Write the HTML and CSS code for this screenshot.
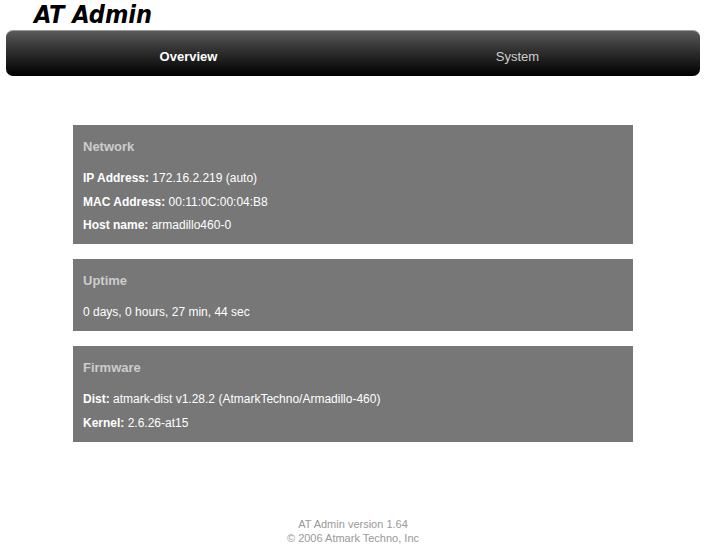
FILE: index.html
```html
<!DOCTYPE html>
<html>
<head>
<meta charset="utf-8">
<title>AT Admin</title>
<link rel="stylesheet" href="styles.css">
</head>
<body>
<div class="page">
  <h1 class="logo">AT Admin</h1>
  <nav class="navbar">
    <a class="tab active" href="#">Overview</a>
    <a class="tab" href="#">System</a>
  </nav>
  <main class="content">
    <section class="panel">
      <h2 class="panel-title">Network</h2>
      <p class="row"><b>IP Address:</b> 172.16.2.219 (auto)</p>
      <p class="row"><b>MAC Address:</b> 00:11:0C:00:04:B8</p>
      <p class="row"><b>Host name:</b> armadillo460-0</p>
    </section>
    <section class="panel">
      <h2 class="panel-title">Uptime</h2>
      <p class="row">0 days, 0 hours, 27 min, 44 sec</p>
    </section>
    <section class="panel">
      <h2 class="panel-title">Firmware</h2>
      <p class="row"><b>Dist:</b> atmark-dist v1.28.2 (AtmarkTechno/Armadillo-460)</p>
      <p class="row"><b>Kernel:</b> 2.6.26-at15</p>
    </section>
  </main>
  <footer class="footer">
    <div>AT Admin version 1.64</div>
    <div>&copy; 2006 Atmark Techno, Inc</div>
  </footer>
</div>
</body>
</html>
```

FILE: styles.css
```css
html, body {
  margin: 0;
  padding: 0;
  background: #ffffff;
}

body {
  font-family: "Liberation Sans", Arial, sans-serif;
  color: #ffffff;
}

.page {
  padding: 0 8px 0 6px;
}

.logo {
  margin: 0;
  padding: 1px 0 0 28px;
  height: 30px;
  box-sizing: border-box;
  line-height: 28px;
  font-family: "DejaVu Sans Condensed", "DejaVu Sans", sans-serif;
  font-stretch: condensed;
  font-weight: bold;
  font-style: italic;
  font-size: 25px;
  color: #000000;
}

.navbar {
  display: flex;
  height: 46px;
  padding: 6px 18px 0 18px;
  border-radius: 7px;
  background: linear-gradient(to bottom, #5a5a5a 0%, #333333 40%, #000000 100%);
  border-top: 1px solid #9a9a9a;
  box-sizing: border-box;
}

.tab {
  flex: 1;
  display: flex;
  align-items: center;
  justify-content: center;
  font-size: 13px;
  color: #cfcfcf;
  text-decoration: none;
}

.tab.active {
  color: #ffffff;
  font-weight: bold;
}

.content {
  display: flex;
  flex-direction: column;
  align-items: center;
  gap: 15px;
  padding-top: 49px;
}

.panel {
  width: 560px;
  box-sizing: border-box;
  background: #777777;
  padding: 12px 10px 6.5px 10px;
}

.panel-title {
  margin: 0 0 10px 0;
  font-size: 13px;
  line-height: 20px;
  font-weight: bold;
  color: #cccccc;
}

.row {
  margin: 0;
  font-size: 12px;
  line-height: 23.5px;
  color: #ffffff;
}

.row b {
  font-weight: bold;
}

.footer {
  margin-top: 75px;
  text-align: center;
  font-size: 11px;
  line-height: 14px;
  color: #999999;
}
```
